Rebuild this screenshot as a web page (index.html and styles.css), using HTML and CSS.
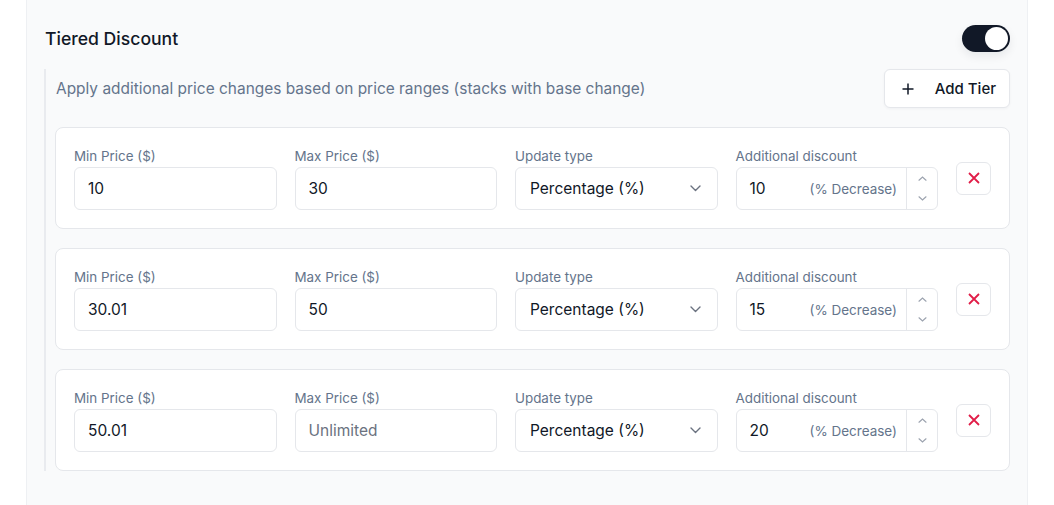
FILE: index.html
```html
<!DOCTYPE html>
<html lang="en">
<head>
    <meta charset="UTF-8">
    <meta name="viewport" content="width=device-width, initial-scale=1.0">
    <title>Tiered Discount</title>
    <link rel="stylesheet" href="styles.css">
</head>
<body>
    <div class="panel">
        <div class="panel-header">
            <h3 class="panel-title">Tiered Discount</h3>
            <button class="toggle" aria-label="Toggle tiered discount"><span class="knob"></span></button>
        </div>

        <div class="tiers">
            <div class="tiers-top">
                <p class="hint">Apply additional price changes based on price ranges (stacks with base change)</p>
                <button class="add-tier">
                    <svg width="12" height="12" viewBox="0 0 12 12"><path d="M6 0.5v11M0.5 6h11" stroke="#111827" stroke-width="1.5" fill="none"/></svg>
                    Add Tier
                </button>
            </div>

            <!-- tier 1 -->
            <div class="tier">
                <div class="field">
                    <label>Min Price ($)</label>
                    <input type="text" value="10">
                </div>
                <div class="field">
                    <label>Max Price ($)</label>
                    <input type="text" value="30" placeholder="Unlimited">
                </div>
                <div class="field">
                    <label>Update type</label>
                    <div class="select">
                        <span>Percentage (%)</span>
                        <svg width="11" height="7" viewBox="0 0 11 7"><path d="M1 1l4.5 4.5L10 1" stroke="#6b7280" stroke-width="1.4" fill="none" stroke-linecap="round" stroke-linejoin="round"/></svg>
                    </div>
                </div>
                <div class="field">
                    <label>Additional discount</label>
                    <div class="number">
                        <span class="value">10</span>
                        <span class="suffix">(% Decrease)</span>
                        <div class="spin">
                            <svg width="9" height="5" viewBox="0 0 9 5"><path d="M1 4.2L4.5 1L8 4.2" stroke="#9ca3af" stroke-width="1.2" fill="none" stroke-linecap="round"/></svg>
                            <svg width="9" height="5" viewBox="0 0 9 5"><path d="M1 0.8L4.5 4L8 0.8" stroke="#9ca3af" stroke-width="1.2" fill="none" stroke-linecap="round"/></svg>
                        </div>
                    </div>
                </div>
                <button class="remove" aria-label="Remove tier">
                    <svg width="12" height="12" viewBox="0 0 12 12"><path d="M1 1l10 10M11 1L1 11" stroke="#e11d48" stroke-width="1.8" fill="none"/></svg>
                </button>
            </div>

            <!-- tier 2 -->
            <div class="tier">
                <div class="field">
                    <label>Min Price ($)</label>
                    <input type="text" value="30.01">
                </div>
                <div class="field">
                    <label>Max Price ($)</label>
                    <input type="text" value="50" placeholder="Unlimited">
                </div>
                <div class="field">
                    <label>Update type</label>
                    <div class="select">
                        <span>Percentage (%)</span>
                        <svg width="11" height="7" viewBox="0 0 11 7"><path d="M1 1l4.5 4.5L10 1" stroke="#6b7280" stroke-width="1.4" fill="none" stroke-linecap="round" stroke-linejoin="round"/></svg>
                    </div>
                </div>
                <div class="field">
                    <label>Additional discount</label>
                    <div class="number">
                        <span class="value">15</span>
                        <span class="suffix">(% Decrease)</span>
                        <div class="spin">
                            <svg width="9" height="5" viewBox="0 0 9 5"><path d="M1 4.2L4.5 1L8 4.2" stroke="#9ca3af" stroke-width="1.2" fill="none" stroke-linecap="round"/></svg>
                            <svg width="9" height="5" viewBox="0 0 9 5"><path d="M1 0.8L4.5 4L8 0.8" stroke="#9ca3af" stroke-width="1.2" fill="none" stroke-linecap="round"/></svg>
                        </div>
                    </div>
                </div>
                <button class="remove" aria-label="Remove tier">
                    <svg width="12" height="12" viewBox="0 0 12 12"><path d="M1 1l10 10M11 1L1 11" stroke="#e11d48" stroke-width="1.8" fill="none"/></svg>
                </button>
            </div>

            <!-- tier 3 -->
            <div class="tier">
                <div class="field">
                    <label>Min Price ($)</label>
                    <input type="text" value="50.01">
                </div>
                <div class="field">
                    <label>Max Price ($)</label>
                    <input type="text" value="" placeholder="Unlimited">
                </div>
                <div class="field">
                    <label>Update type</label>
                    <div class="select">
                        <span>Percentage (%)</span>
                        <svg width="11" height="7" viewBox="0 0 11 7"><path d="M1 1l4.5 4.5L10 1" stroke="#6b7280" stroke-width="1.4" fill="none" stroke-linecap="round" stroke-linejoin="round"/></svg>
                    </div>
                </div>
                <div class="field">
                    <label>Additional discount</label>
                    <div class="number">
                        <span class="value">20</span>
                        <span class="suffix">(% Decrease)</span>
                        <div class="spin">
                            <svg width="9" height="5" viewBox="0 0 9 5"><path d="M1 4.2L4.5 1L8 4.2" stroke="#9ca3af" stroke-width="1.2" fill="none" stroke-linecap="round"/></svg>
                            <svg width="9" height="5" viewBox="0 0 9 5"><path d="M1 0.8L4.5 4L8 0.8" stroke="#9ca3af" stroke-width="1.2" fill="none" stroke-linecap="round"/></svg>
                        </div>
                    </div>
                </div>
                <button class="remove" aria-label="Remove tier">
                    <svg width="12" height="12" viewBox="0 0 12 12"><path d="M1 1l10 10M11 1L1 11" stroke="#e11d48" stroke-width="1.8" fill="none"/></svg>
                </button>
            </div>
        </div>
    </div>
</body>
</html>
```

FILE: styles.css
```css
* {
    box-sizing: border-box;
}
body {
    margin: 0;
    background: #ffffff;
    font-family: Inter, "Noto Sans", Arial, sans-serif;
    color: #111827;
}
.panel {
    margin-left: 26px;
    width: 1002px;
    min-height: 505px;
    background: #f9fafb;
    border-left: 1px solid #eef0f3;
    border-right: 1px solid #eef0f3;
    padding: 24px 17px 0 17px;
}
.panel-header {
    display: flex;
    align-items: center;
    justify-content: space-between;
    height: 28px;
    margin-bottom: 17px;
}
.panel-title {
    margin: 0 0 0 1px;
    font-size: 17.6px;
    font-weight: 500;
}
.toggle {
    width: 48px;
    height: 27px;
    border: none;
    border-radius: 14px;
    background: #111827;
    padding: 2px;
    display: flex;
    justify-content: flex-end;
    align-items: center;
    cursor: pointer;
    box-shadow: 0 4px 10px rgba(17, 24, 39, 0.08);
}
.knob {
    width: 23px;
    height: 23px;
    border-radius: 50%;
    background: #ffffff;
}
.tiers {
    border-left: 2px solid #e9ebef;
    padding-left: 9px;
    display: flex;
    flex-direction: column;
    gap: 19px;
}
.tiers-top {
    display: flex;
    align-items: center;
    justify-content: space-between;
}
.hint {
    margin: 0 0 0 1px;
    font-size: 15.45px;
    color: #64748b;
}
.add-tier {
    height: 39px;
    display: flex;
    align-items: center;
    gap: 21px;
    padding: 0 13px 0 17px;
    background: #ffffff;
    border: 1px solid #e5e7eb;
    border-radius: 6px;
    font-family: inherit;
    font-size: 15px;
    font-weight: 500;
    color: #111827;
    cursor: pointer;
    box-shadow: 0 1px 3px rgba(17, 24, 39, 0.04);
}
.tier {
    display: grid;
    grid-template-columns: repeat(4, 1fr) 35px;
    column-gap: 18px;
    align-items: center;
    background: #ffffff;
    border: 1px solid #e5e7eb;
    border-radius: 8px;
    padding: 18px;
}
.field {
    display: flex;
    flex-direction: column;
    gap: 1px;
}
.field label {
    font-size: 13.4px;
    line-height: 20px;
    color: #64748b;
}
.field input,
.select,
.number {
    height: 43px;
    width: 100%;
    background: #ffffff;
    border: 1px solid #e5e7eb;
    border-radius: 6px;
    font-family: inherit;
    font-size: 15.5px;
    color: #111827;
}
.field input {
    padding: 0 13px;
    outline: none;
}
.field input::placeholder {
    color: #6b7280;
}
.select {
    display: flex;
    align-items: center;
    justify-content: space-between;
    padding: 0 16px 0 14px;
}
.number {
    display: flex;
    align-items: center;
    padding-left: 13px;
}
.number .value {
    flex: 1;
}
.number .suffix {
    font-size: 13.5px;
    color: #64748b;
    margin-right: 9px;
}
.spin {
    width: 31px;
    height: 100%;
    border-left: 1px solid #e5e7eb;
    display: flex;
    flex-direction: column;
    align-items: center;
    justify-content: center;
    gap: 15px;
}
.remove {
    width: 35px;
    height: 33px;
    display: flex;
    align-items: center;
    justify-content: center;
    background: #ffffff;
    border: 1px solid #e5e7eb;
    border-radius: 6px;
    padding: 0;
    cursor: pointer;
}
```
